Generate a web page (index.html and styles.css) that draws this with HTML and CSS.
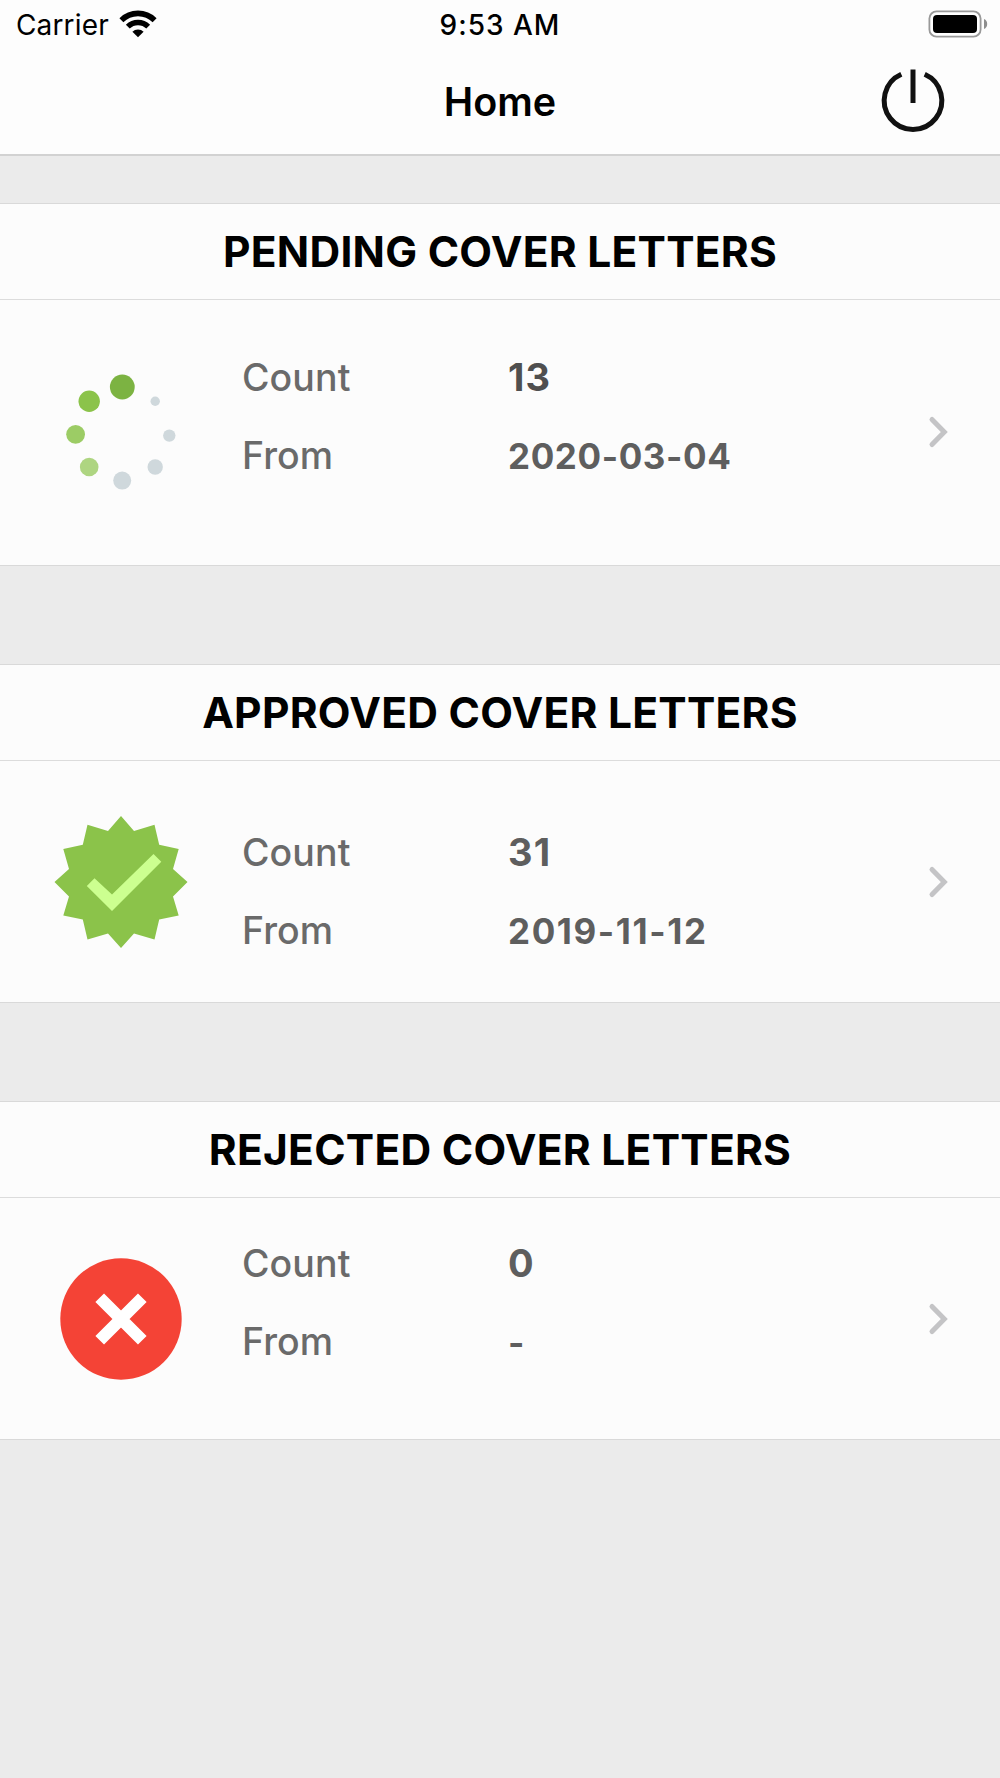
FILE: index.html
```html
<!DOCTYPE html>
<html lang="en">

<head>
    <meta charset="UTF-8">
    <meta name="viewport" content="width=device-width, initial-scale=1.0">
    <title>Home</title>
    <link rel="stylesheet" href="styles.css">
</head>

<body>
    <header>
        <div class="status-bar">
            <div class="carrier">
                <span>Carrier</span>
                <svg class="wifi" width="38" height="28" viewBox="0 0 38 28">
                    <path d="M2.4 10.2 A23.6 23.6 0 0 1 35.6 10.2" fill="none" stroke="#000" stroke-width="5.6" />
                    <path d="M8.8 16.7 A14.4 14.4 0 0 1 29.2 16.7" fill="none" stroke="#000" stroke-width="5.4" />
                    <path d="M19 27.2 L13.4 21.7 A8 8 0 0 1 24.6 21.7 Z" />
                </svg>
            </div>
            <div class="time">9:53 AM</div>
            <svg class="battery" width="60" height="28" viewBox="0 0 60 28">
                <rect x="1.4" y="1.4" width="51.2" height="25.2" rx="7.2" fill="#fff" stroke="#999" stroke-width="1.8" />
                <rect x="5" y="5" width="44" height="18" rx="4" />
                <path d="M56 9 A5.5 5.5 0 0 1 56 19 Z" fill="#8e8e8e" />
            </svg>
        </div>
        <div class="nav-bar">
            <h1>Home</h1>
            <svg class="power" width="70" height="70" viewBox="0 0 70 70">
                <path d="M23.3 9.3 A28.8 28.8 0 1 0 46.7 9.3" />
                <path d="M35 4.5 V38" />
            </svg>
        </div>
    </header>

    <main>
        <section class="card pending">
            <h2>PENDING COVER LETTERS</h2>
            <div class="card-body">
                <svg class="icon" width="140" height="140" viewBox="0 0 140 140">
                    <circle cx="71.3" cy="25" r="12.4" fill="#7cb342" />
                    <circle cx="38.2" cy="39.2" r="10.7" fill="#8bc34a" />
                    <circle cx="24.6" cy="72.3" r="9.4" fill="#9ccc65" />
                    <circle cx="38.2" cy="105" r="9.3" fill="#aed581" />
                    <circle cx="71.2" cy="118.6" r="9" fill="#cfd8dc" />
                    <circle cx="104.2" cy="105" r="7.7" fill="#cfd8dc" />
                    <circle cx="118.3" cy="73.6" r="6.2" fill="#cfd8dc" />
                    <circle cx="104.2" cy="39.2" r="4.7" fill="#cfd8dc" />
                </svg>
                <div class="details">
                    <div class="row"><span class="label">Count</span><span class="count dark">13</span></div>
                    <div class="row"><span class="label">From</span><span class="date">2020-03-04</span></div>
                </div>
                <svg class="chevron" width="24" height="36" viewBox="0 0 24 36">
                    <path d="M6 5.5 L18.3 18 L6 30.5" />
                </svg>
            </div>
        </section>

        <section class="card approved">
            <h2>APPROVED COVER LETTERS</h2>
            <div class="card-body">
                <svg class="icon" width="140" height="140" viewBox="0 0 140 140">
                    <path fill="#8bc34a" d="M70 4 L83 19 L103.5 12.8 L108.2 32.8 L127.7 37 L122 57 L136.5 70 L122 84.5 L127.7 103.5 L108.2 107.5 L103.5 127.5 L83 121.5 L70 136 L57 121.5 L36.5 127.5 L31.8 107.5 L12.3 103.5 L18 84.5 L3.5 70 L18 57 L12.3 37 L31.8 32.8 L36.5 12.8 L57 19 Z" />
                    <path fill="#ccff90" d="M35.8 74 L43.5 66.3 L61 82.5 L102.5 42 L110.3 49.7 L61 99 Z" />
                </svg>
                <div class="details">
                    <div class="row"><span class="label">Count</span><span class="count">31</span></div>
                    <div class="row"><span class="label">From</span><span class="date">2019-11-12</span></div>
                </div>
                <svg class="chevron" width="24" height="36" viewBox="0 0 24 36">
                    <path d="M6 5.5 L18.3 18 L6 30.5" />
                </svg>
            </div>
        </section>

        <section class="card rejected">
            <h2>REJECTED COVER LETTERS</h2>
            <div class="card-body">
                <svg class="icon" width="140" height="140" viewBox="0 0 140 140">
                    <circle cx="70" cy="70" r="60.7" fill="#f44336" />
                    <path d="M48.7 48.7 L91.3 91.3 M91.3 48.7 L48.7 91.3" stroke="#fff" stroke-width="12.2" />
                </svg>
                <div class="details">
                    <div class="row"><span class="label">Count</span><span class="count">0</span></div>
                    <div class="row"><span class="label">From</span><span class="date">-</span></div>
                </div>
                <svg class="chevron" width="24" height="36" viewBox="0 0 24 36">
                    <path d="M6 5.5 L18.3 18 L6 30.5" />
                </svg>
            </div>
        </section>
    </main>
</body>

</html>
```
FILE: styles.css
```css
* {
    box-sizing: border-box;
}

body {
    margin: 0;
    min-height: 1778px;
    font-family: Inter, "Liberation Sans", sans-serif;
    background-color: #ebebeb;
    color: #000;
}

svg {
    display: block;
}

h1,
h2 {
    margin: 0;
    text-align: center;
}

header {
    height: 156px;
    background-color: #fdfdfd;
    border-bottom: 2px solid #d2d2d2;
}

.status-bar {
    display: grid;
    grid-template-columns: 1fr auto 1fr;
    align-items: center;
    height: 50px;
    padding: 0 12px 1px;
    font-size: 28px;
}

.carrier {
    display: flex;
    align-items: center;
    gap: 10px;
    padding-left: 4px;
    letter-spacing: 0.15px;
}

.carrier span,
.time {
    padding-top: 1px;
}

.wifi {
    margin-bottom: 1px;
}

.time {
    font-weight: 500;
    letter-spacing: 1px;
}

.battery {
    justify-self: end;
    margin-bottom: 1px;
}

.nav-bar {
    display: grid;
    grid-template-columns: 1fr auto 1fr;
    align-items: center;
    height: 104px;
    padding: 0 52px 4px;
}

.nav-bar h1 {
    grid-column: 2;
    padding-top: 4px;
    font-size: 39.5px;
    font-weight: 600;
}

.power {
    justify-self: end;
    fill: none;
    stroke: #111;
    stroke-width: 5;
}

main {
    display: flex;
    flex-direction: column;
    gap: 98px;
    padding-top: 47px;
}

.card {
    background-color: #fcfcfc;
    border-top: 1px solid #d9d9d9;
    border-bottom: 1px solid #d9d9d9;
}

.card h2 {
    height: 96px;
    line-height: 95px;
    font-size: 42.5px;
    font-weight: 700;
    letter-spacing: 0.25px;
    border-bottom: 1px solid #dcdcdc;
}

.card-body {
    display: flex;
    align-items: center;
    height: 241px;
    padding: 0 50px 0 51px;
}

.pending .card-body {
    height: 265px;
    padding-bottom: 2px;
}

.details {
    flex: 1;
    align-self: flex-start;
    padding-left: 51px;
}

.pending .details {
    padding-top: 38px;
}

.approved .details {
    padding-top: 52px;
}

.rejected .details {
    padding-top: 26px;
}

.row {
    display: grid;
    grid-template-columns: 266px 1fr;
    align-items: baseline;
    height: 78px;
    line-height: 79px;
    font-size: 37.5px;
}

.label {
    color: #6a6a6a;
    font-weight: 450;
    letter-spacing: 0.1px;
}

.count {
    font-size: 38px;
    font-weight: 700;
    letter-spacing: 1.2px;
    color: #5e5e5e;
}

.count.dark {
    color: #4f4f4f;
}

.date {
    font-size: 35px;
    font-weight: 700;
    letter-spacing: 0.6px;
    color: #5e5e5e;
}

.approved .date {
    letter-spacing: 1.6px;
}

.chevron {
    fill: none;
    stroke: #c4c4c6;
    stroke-width: 5;
    stroke-linecap: round;
}
```
